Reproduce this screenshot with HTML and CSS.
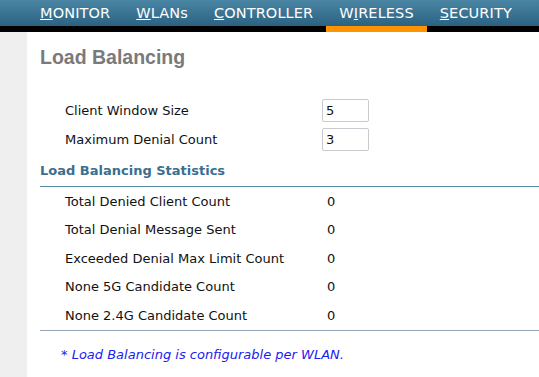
FILE: index.html
```html
<!DOCTYPE html>
<html lang="en">
<head>
    <meta charset="UTF-8">
    <title>Load Balancing</title>
    <link rel="stylesheet" href="styles.css">
</head>
<body>
    <div class="topnav">
        <a href="#"><u>M</u>ONITOR</a>
        <a href="#"><u>W</u>LANs</a>
        <a href="#"><u>C</u>ONTROLLER</a>
        <a href="#" class="active">W<u>I</u>RELESS</a>
        <a href="#"><u>S</u>ECURITY</a>
    </div>
    <div class="page">
        <div class="sidebar"></div>
        <div class="content">
            <h1>Load Balancing</h1>

            <div class="settings">
                <div class="row">
                    <label for="winsize">Client Window Size</label>
                    <input type="text" id="winsize" value="5">
                </div>
                <div class="row">
                    <label for="maxdeny">Maximum Denial Count</label>
                    <input type="text" id="maxdeny" value="3">
                </div>
            </div>

            <h2>Load Balancing Statistics</h2>
            <div class="stats">
                <div class="row"><span>Total Denied Client Count</span><span>0</span></div>
                <div class="row"><span>Total Denial Message Sent</span><span>0</span></div>
                <div class="row"><span>Exceeded Denial Max Limit Count</span><span>0</span></div>
                <div class="row"><span>None 5G Candidate Count</span><span>0</span></div>
                <div class="row"><span>None 2.4G Candidate Count</span><span>0</span></div>
            </div>

            <p class="note">* Load Balancing is configurable per WLAN.</p>
        </div>
    </div>
</body>
</html>
```

FILE: styles.css
```css
body {
    margin: 0;
    font-family: "DejaVu Sans", Verdana, sans-serif;
    font-size: 13px;
    color: #111;
    background: #fff;
    height: 377px;
    overflow: hidden;
}
.topnav {
    display: flex;
    height: 26px;
    padding-left: 27px;
    background: linear-gradient(#4a85a4, #2c6281);
    border-bottom: 6px solid #000;
}
.topnav a {
    padding: 0 13px;
    height: 26px;
    line-height: 27px;
    color: #fff;
    text-decoration: none;
    font-size: 14.5px;
    letter-spacing: 0.12px;
    border-bottom: 6px solid transparent;
}
.topnav a.active {
    border-bottom-color: #ff9400;
}
.page {
    display: flex;
    height: 345px;
}
.sidebar {
    width: 27px;
    background: #efefef;
}
.content {
    flex: 1;
    padding-left: 13px;
}
h1 {
    margin: 14px 0 27px;
    font-family: "Liberation Sans", Arial, sans-serif;
    font-size: 19.5px;
    font-weight: bold;
    color: #7a7a7a;
}
.settings .row {
    display: flex;
    align-items: center;
    height: 29px;
    padding-left: 25px;
}
.settings label {
    width: 257px;
}
.settings input {
    width: 39px;
    height: 21px;
    padding: 0 3px;
    border: 1px solid #c9c9cf;
    border-radius: 2px;
    font-family: "DejaVu Sans", Verdana, sans-serif;
    font-size: 13px;
    color: #111;
}
h2 {
    margin: 9px 0 0;
    padding-bottom: 8px;
    font-size: 13px;
    font-weight: bold;
    color: #3a6f8f;
    border-bottom: 1px solid #5b8ba4;
}
.stats {
    border-bottom: 1px solid #97a3b6;
}
.stats .row {
    display: flex;
    align-items: center;
    height: 28.5px;
    padding-left: 25px;
}
.stats .row span:first-child {
    width: 262px;
}
.note {
    margin: 16px 0 0 21px;
    font-style: italic;
    color: #2020f0;
}
```
